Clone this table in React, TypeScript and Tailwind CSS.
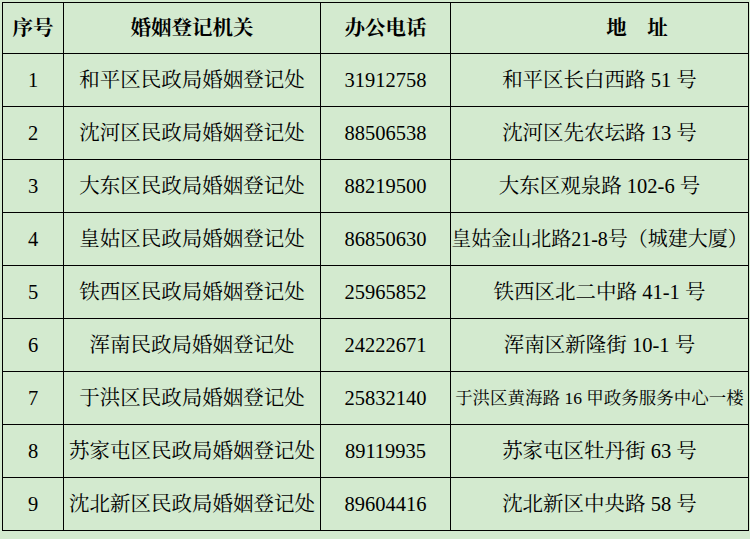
import React from 'react'

const rows = [
  { no: '1', name: '和平区民政局婚姻登记处', phone: '31912758', addr: '和平区长白西路 51 号' },
  { no: '2', name: '沈河区民政局婚姻登记处', phone: '88506538', addr: '沈河区先农坛路 13 号' },
  { no: '3', name: '大东区民政局婚姻登记处', phone: '88219500', addr: '大东区观泉路 102-6 号' },
  { no: '4', name: '皇姑区民政局婚姻登记处', phone: '86850630', addr: '皇姑金山北路21-8号（城建大厦）', tight: true },
  { no: '5', name: '铁西区民政局婚姻登记处', phone: '25965852', addr: '铁西区北二中路 41-1 号' },
  { no: '6', name: '浑南民政局婚姻登记处', phone: '24222671', addr: '浑南区新隆街 10-1 号' },
  { no: '7', name: '于洪区民政局婚姻登记处', phone: '25832140', addr: '于洪区黄海路 16 甲政务服务中心一楼', small: true },
  { no: '8', name: '苏家屯区民政局婚姻登记处', phone: '89119935', addr: '苏家屯区牡丹街 63 号' },
  { no: '9', name: '沈北新区民政局婚姻登记处', phone: '89604416', addr: '沈北新区中央路 58 号' },
]

const font = {
  fontFamily: "'Liberation Serif', 'Noto Serif CJK SC', 'Noto Sans CJK SC', serif",
}

const App = () => {
  return (
    <div className="w-[750px] h-[539px] bg-[#d3eacf] pt-[2px] pl-[2px] text-black" style={font}>
      <table className="border-collapse table-fixed w-[746px]">
        <colgroup>
          <col className="w-[61px]" />
          <col className="w-[257px]" />
          <col className="w-[130px]" />
          <col className="w-[298px]" />
        </colgroup>
        <thead>
          <tr className="h-[51px] text-[20.5px] font-bold">
            <th className="border border-black text-center p-0">序号</th>
            <th className="border border-black text-center p-0">婚姻登记机关</th>
            <th className="border border-black text-center p-0">办公电话</th>
            <th className="border border-black text-center p-0 pl-[75px]">地　址</th>
          </tr>
        </thead>
        <tbody>
          {rows.map((r) => (
            <tr key={r.no} className="h-[53px] text-[20.5px]">
              <td className="border border-black text-center p-0">{r.no}</td>
              <td className="border border-black text-center p-0 whitespace-nowrap">{r.name}</td>
              <td className="border border-black text-center p-0">{r.phone}</td>
              <td
                className={`border border-black text-center p-0 whitespace-nowrap ${
                  r.small ? 'text-[17.5px]' : r.tight ? 'text-[20px]' : 'text-[20.5px]'
                }`}
              >
                {r.addr}
              </td>
            </tr>
          ))}
        </tbody>
      </table>
    </div>
  )
}

export default App
